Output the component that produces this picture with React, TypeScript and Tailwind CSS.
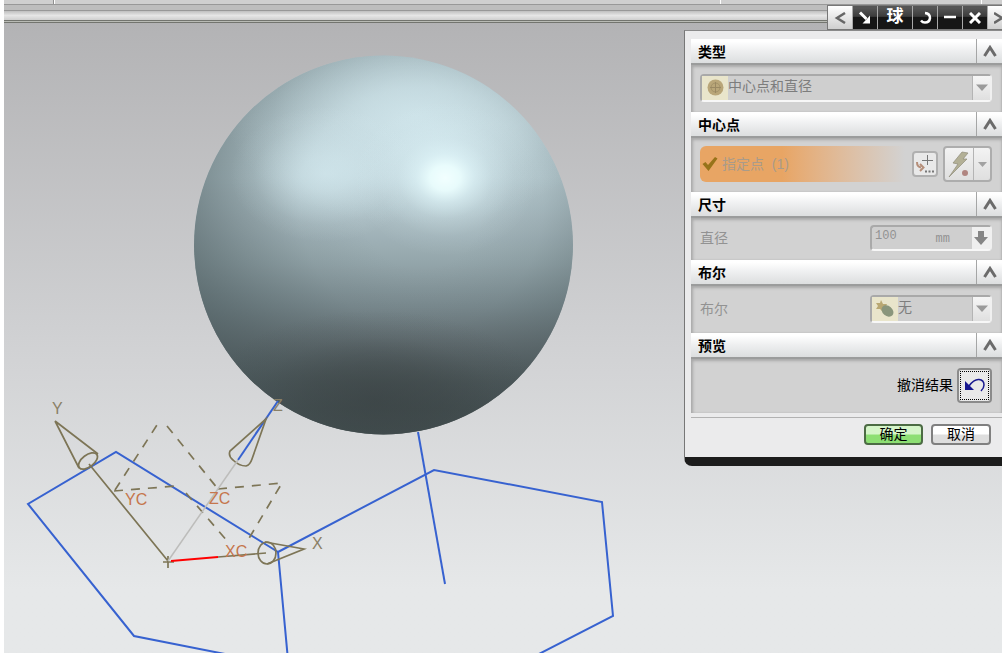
import React from "react";

interface SectionProps {
  title: string;
  bodyClass: string;
  children: React.ReactNode;
}

const Section: React.FC<SectionProps> = ({ title, bodyClass, children }) => {
  return (
    <section>
      <div className="flex h-[26px] items-stretch border-b-2 border-[#9b9c9c] bg-linear-to-b from-white from-10% via-[#eeeff0] via-50% to-[#dcdedf]">
        <h2 className="flex-1 pl-[7px] text-[14px] leading-[26px] font-bold text-black">
          {title}
        </h2>
        <button
          type="button"
          aria-label={`收起${title}`}
          className="flex w-[26px] items-center justify-center border-l border-[#a5a6a6]"
        >
          <svg width="14" height="12" viewBox="0 0 14 12">
            <path d="M1.5 11 L7 2.5 L12.5 11" fill="none" stroke="#6b6b6b" strokeWidth="3" />
          </svg>
        </button>
      </div>
      <div
        className={`flex items-center bg-[#d2d2d2] pr-[10px] pb-[2px] pl-[9px] text-[#929292] shadow-[inset_2px_2px_3px_#a9a9a9,inset_-1px_0_2px_#b5b5b5] ${bodyClass}`}
      >
        {children}
      </div>
    </section>
  );
};

const Triangle = () => (
  <svg width="12" height="7" viewBox="0 0 12 7">
    <path d="M0 0.5 H12 L6 7 Z" fill="#9a9a9a" />
  </svg>
);

interface PickerProps {
  id: string;
  label: string;
  value: string;
  icon: React.ReactNode;
  className: string;
}

const Picker: React.FC<PickerProps> = ({ id, label, value, icon, className }) => {
  return (
    <div
      className={`flex h-7 items-stretch rounded-[4px] border-2 border-t-[#a9a9a9] border-r-[#f0f0f0] border-b-[#f7f7f7] border-l-[#a9a9a9] bg-[#cfcfcf] ${className}`}
    >
      <span className="flex w-[26px] items-center justify-center bg-[#e9e5cb]">{icon}</span>
      <select
        id={id}
        aria-label={label}
        disabled
        className="min-w-0 flex-1 appearance-none bg-transparent pb-1 text-[14px] leading-5 text-[#7d7d7d] opacity-100"
      >
        <option>{value}</option>
      </select>
      <span className="flex w-[18px] items-center justify-center border-l border-[#b4b4b4] bg-linear-to-b from-[#f6f6f6] to-[#dfdfdf]">
        <Triangle />
      </span>
    </div>
  );
};

const Scene = () => {
  return (
    <svg className="absolute inset-0 h-full w-full" aria-label="模型视图">
      <defs>
        <linearGradient id="base" x1="0" y1="0" x2="0" y2="1">
          <stop offset="0" stopColor="#b2c7cd" />
          <stop offset="0.18" stopColor="#c0d4da" />
          <stop offset="0.32" stopColor="#b9cdd3" />
          <stop offset="0.44" stopColor="#a6b8be" />
          <stop offset="0.54" stopColor="#95a7ac" />
          <stop offset="0.66" stopColor="#7b8b90" />
          <stop offset="0.76" stopColor="#646f73" />
          <stop offset="0.86" stopColor="#4b5456" />
          <stop offset="0.93" stopColor="#3f4748" />
          <stop offset="1" stopColor="#3c4445" />
        </linearGradient>
        <radialGradient id="edge" cx="0.6" cy="0.4" r="0.64">
          <stop offset="0.25" stopColor="#4a595c" stopOpacity="0" />
          <stop offset="0.5" stopColor="#4a595c" stopOpacity="0.1" />
          <stop offset="0.75" stopColor="#4a595c" stopOpacity="0.35" />
          <stop offset="1" stopColor="#4a595c" stopOpacity="0.62" />
        </radialGradient>
        <radialGradient id="top">
          <stop offset="0" stopColor="#d6ecf2" stopOpacity="0.7" />
          <stop offset="0.25" stopColor="#d6ecf2" stopOpacity="0.56" />
          <stop offset="0.5" stopColor="#d6ecf2" stopOpacity="0.32" />
          <stop offset="0.75" stopColor="#d6ecf2" stopOpacity="0.1" />
          <stop offset="1" stopColor="#d6ecf2" stopOpacity="0" />
        </radialGradient>
        <radialGradient id="shine">
          <stop offset="0" stopColor="#f2ffff" />
          <stop offset="0.16" stopColor="#ecffff" stopOpacity="0.92" />
          <stop offset="0.32" stopColor="#e3f9fd" stopOpacity="0.6" />
          <stop offset="0.52" stopColor="#dff5fa" stopOpacity="0.28" />
          <stop offset="0.75" stopColor="#dff5fa" stopOpacity="0.08" />
          <stop offset="1" stopColor="#dff5fa" stopOpacity="0" />
        </radialGradient>
        <radialGradient id="dark">
          <stop offset="0" stopColor="#394142" stopOpacity="0.6" />
          <stop offset="0.4" stopColor="#394142" stopOpacity="0.38" />
          <stop offset="0.7" stopColor="#394142" stopOpacity="0.12" />
          <stop offset="1" stopColor="#394142" stopOpacity="0" />
        </radialGradient>
        <clipPath id="ball">
          <circle cx="383.5" cy="245" r="189.5" />
        </clipPath>
      </defs>

      <g clipPath="url(#ball)">
        <circle cx="383.5" cy="245" r="190" fill="url(#base)" />
        <circle cx="383.5" cy="245" r="190" fill="url(#edge)" />
        <ellipse cx="415" cy="115" rx="190" ry="110" fill="url(#top)" />
        <ellipse cx="325" cy="174" rx="95" ry="68" fill="url(#top)" />
        <ellipse cx="445" cy="178" rx="92" ry="78" fill="url(#shine)" />
        <ellipse cx="375" cy="400" rx="170" ry="90" fill="url(#dark)" />
      </g>

      {/* Sketch curves */}
      <g fill="none" stroke="#3762d0" strokeWidth="2">
        <path d="M288 660 L278 552 L116 452 L28 504 L134 636 L230 655" />
        <path d="M278 552 L434 470 L602 502 L613 616 L535 656" />
        <path d="M418 432 L445 584" />
        <path d="M278 401 L238 460" />
      </g>

      {/* Datum axes */}
      <g fill="none" stroke="#7d7556" strokeWidth="1.7">
        <path d="M168 561 L89 464 M163 562 H174 M168 556 V568" />
        <path d="M55 421 L98 454 M55 421 L79 468" />
        <ellipse cx="88" cy="461" rx="11" ry="6" transform="rotate(-37 88 461)" />
        <path d="M266 419 L230 451 Q228 456 233 460 Q239 466 246 466 Q250 465 252 459 Z" />
        <path d="M218 557 L266 553" />
        <path d="M265 542 L304 549 L267 564" />
        <ellipse cx="267" cy="553" rx="9" ry="11" />
        <path strokeDasharray="9 8" d="M115 490 L157 425 M167 426 L218 489 M114 491 L176 486 M218 489 L282 483 L248 540 M186 493 L228 542" />
      </g>
      <path d="M168 561 L238 460" stroke="#bdbdbb" strokeWidth="1.5" />
      <path d="M171 561 L218 557" stroke="#ff0000" strokeWidth="2" />
      <g className="font-['Liberation_Sans',sans-serif] text-[16px]" fill="#8a8067">
        <text x="52" y="414">Y</text>
        <text x="312" y="549">X</text>
        <text x="273" y="411">Z</text>
      </g>
      <g className="font-['Liberation_Sans',sans-serif] text-[16px]" fill="#c5764d">
        <text x="125" y="505">YC</text>
        <text x="209" y="504">ZC</text>
        <text x="225" y="557">XC</text>
      </g>
    </svg>
  );
};

const TitleBar = () => {
  const light = "flex w-6 items-center justify-center bg-linear-to-b from-white to-[#cfcfcf]";
  const dark =
    "flex w-6 items-center justify-center bg-linear-to-b from-[#555555] from-10% via-[#3c3c3c] via-45% to-[#161616] to-50%";
  return (
    <header className="flex h-[25px] w-[175px] gap-px self-end overflow-hidden border border-r-0 border-[#777777] bg-[#a9a9a9] *:shrink-0">
      <button type="button" aria-label="上一个" className={light}>
        <svg width="12" height="12" viewBox="0 0 12 12">
          <path d="M11 1 L3 6 L11 11" fill="none" stroke="#666666" strokeWidth="2.5" />
        </svg>
      </button>
      <button type="button" aria-label="固定" className={dark}>
        <svg width="14" height="14" viewBox="0 0 14 14">
          <path d="M2 1.5 L8.5 8" stroke="#ffffff" strokeWidth="3" />
          <path d="M12 4.5 V12.5 H4.5 Z" fill="#ffffff" />
        </svg>
      </button>
      <h1 className="w-[34px] bg-linear-to-b from-[#555555] from-10% via-[#3c3c3c] via-45% to-[#161616] to-50% text-center text-[17px] leading-[22px] font-bold text-white">
        球
      </h1>
      <button type="button" aria-label="重置" className={dark}>
        <svg width="14" height="14" viewBox="0 0 14 14">
          <path d="M7 2 Q12 2.5 12 7 Q11.5 11.5 7 11.5 Q4.5 11.5 3 9.5" fill="none" stroke="#ffffff" strokeWidth="2.5" />
        </svg>
      </button>
      <button type="button" aria-label="最小化" className={dark}>
        <svg width="12" height="12" viewBox="0 0 12 12">
          <path d="M0 5 H12" stroke="#ffffff" strokeWidth="2.5" />
        </svg>
      </button>
      <button type="button" aria-label="关闭" className={dark}>
        <svg width="12" height="12" viewBox="0 0 12 12">
          <path d="M1 1 L11 11 M11 1 L1 11" stroke="#ffffff" strokeWidth="3" />
        </svg>
      </button>
      <button type="button" aria-label="下一个" className={light}>
        <svg width="12" height="12" viewBox="0 0 12 12">
          <path d="M0 1 L8 6 L0 11" fill="none" stroke="#666666" strokeWidth="2.5" />
        </svg>
      </button>
    </header>
  );
};

const SphereDialog = () => {
  return (
    <div className="absolute top-[5px] right-0 flex w-[318px] flex-col">
      <TitleBar />
      <form className="rounded-bl-lg border-t border-b-[9px] border-l border-t-[#8a8a8a] border-b-[#1c1c1c] border-l-[#777777] bg-[#ebebec] pt-2 pl-[6px]">
        <Section title="类型" bodyClass="h-[47px]">
          <Picker
            id="type"
            label="类型"
            value="中心点和直径"
            className="flex-1"
            icon={
              <svg width="17" height="17" viewBox="0 0 17 17">
                <circle cx="8.5" cy="8.5" r="8" fill="#b9a679" />
                <circle cx="8.5" cy="8.5" r="4.5" fill="none" stroke="#a39268" />
                <path d="M8.5 3 V14 M3 8.5 H14" stroke="#9a8963" strokeWidth="1" />
              </svg>
            }
          />
        </Section>

        <Section title="中心点" bodyClass="h-[54px]">
          <div className="flex h-9 flex-1 items-center rounded-l-md bg-linear-to-r from-[#e8a564] from-40% to-[#d2d2d2]">
            <svg width="16" height="16" viewBox="0 0 16 16" className="mr-1 ml-[2px]">
              <path d="M0.5 8 L3.5 6 L6 9 L13 1 L15.5 2.5 L6.5 15 Z" fill="#977319" />
            </svg>
            <span className="text-[14px] leading-5 text-[#a99b8a]">指定点&nbsp; (1)</span>
          </div>
          <button
            type="button"
            aria-label="点构造器"
            className="ml-[7px] flex size-[26px] items-center justify-center rounded-[4px] border-2 border-[#b0b0b0] bg-[#e9e9e9]"
          >
            <svg width="20" height="20" viewBox="0 0 20 20">
              <path d="M12.5 1 V11 M7 6.5 H18" stroke="#777777" strokeWidth="1" />
              <path d="M2 8 Q2 13 6 13.5 M5 10 L8.5 13.5 L5 17" fill="none" stroke="#b58e79" strokeWidth="2" />
              <path d="M10 17.5 H19" stroke="#777777" strokeWidth="2" strokeDasharray="2 1.5" />
            </svg>
          </button>
          <div className="ml-[5px] flex h-9 w-[49px] items-stretch overflow-hidden rounded-[4px] border-2 border-[#adadad] bg-linear-to-b from-[#f3f3f3] to-[#dfdfdf]">
            <button type="button" aria-label="推断的点" className="flex w-7 items-center justify-center">
              <svg width="24" height="28" viewBox="0 0 24 28">
                <path d="M15 2 L21 3 L16 9 H20 L2 27 L11 14 L6 13 Z" fill="#b3b096" stroke="#8f8d7a" strokeWidth="0.7" />
                <circle cx="18" cy="23" r="3" fill="#b08580" />
              </svg>
            </button>
            <button
              type="button"
              aria-label="更多点类型"
              className="flex flex-1 items-center justify-center border-l border-[#b4b4b4]"
            >
              <svg width="9" height="5" viewBox="0 0 9 5">
                <path d="M0 0 H9 L4.5 5 Z" fill="#a2a2a2" />
              </svg>
            </button>
          </div>
        </Section>

        <Section title="尺寸" bodyClass="h-[42px]">
          <label htmlFor="diameter" className="flex-1 text-[14px] leading-5">直径</label>
          <div className="flex h-[26px] w-[122px] items-stretch rounded-[4px] border-2 border-t-[#a9a9a9] border-r-[#f0f0f0] border-b-[#f7f7f7] border-l-[#a9a9a9] bg-[#cfcfcf]">
            <input
              id="diameter"
              disabled
              defaultValue="100"
              className="min-w-0 flex-1 bg-transparent pb-1 pl-[3px] font-['Liberation_Mono',monospace] text-[12px] text-[#929292]"
            />
            <span className="pt-1 pr-[22px] font-['Liberation_Mono',monospace] text-[12px] leading-4">mm</span>
            <button
              type="button"
              aria-label="公式选项"
              className="flex w-[18px] items-center justify-center bg-[#efefef]"
            >
              <svg width="14" height="14" viewBox="0 0 14 14">
                <path d="M4 0 H10 V6 H14 L7 14 L0 6 H4 Z" fill="#858585" />
              </svg>
            </button>
          </div>
        </Section>

        <Section title="布尔" bodyClass="h-[47px]">
          <label htmlFor="boolean" className="flex-1 text-[14px] leading-5">布尔</label>
          <Picker
            id="boolean"
            label="布尔"
            value="无"
            className="w-[122px]"
            icon={
              <svg width="18" height="18" viewBox="0 0 18 18">
                <path d="M5 0 L7 4 L11 4 L9 8 L6 11 L4 9 L0 9 L2 6 L0 3 L4 3 Z" fill="#b9a873" />
                <ellipse cx="11.5" cy="11" rx="6.5" ry="5" transform="rotate(40 11.5 11)" fill="#8a967c" />
              </svg>
            }
          />
        </Section>

        <Section title="预览" bodyClass="h-[54px] justify-end">
          <span id="undo-label" className="mr-1 text-[14px] leading-5 text-black">撤消结果</span>
          <button
            type="button"
            aria-labelledby="undo-label"
            className="flex size-[35px] rounded-[4px] border-2 border-[#8b8b8b] bg-[#e9e9e9] p-px"
          >
            <span className="flex flex-1 items-center justify-center self-stretch border border-dotted border-black">
              <svg width="22" height="16" viewBox="0 0 22 16">
                <path d="M1 4 V13 H10 Z" fill="#17178f" />
                <path d="M5 9 Q10 2 15 2.5 Q20 3 20 8 Q20 11 17 14" fill="none" stroke="#17178f" strokeWidth="1.5" />
              </svg>
            </span>
          </button>
        </Section>

        <div className="mt-1 flex h-10 gap-2 border-t border-[#b2b2b2] pt-[6px] pr-[11px]">
          <button
            type="submit"
            className="ml-auto h-[21px] w-[59px] rounded-[4px] border-2 border-[#4c6b44] bg-linear-to-b from-[#d5f5c9] from-45% to-[#8ddf73] to-55% text-[14px] leading-[17px] text-black"
          >
            确定
          </button>
          <button
            type="button"
            className="h-[21px] w-[60px] rounded-[4px] border-2 border-[#808080] bg-linear-to-b from-white from-45% to-[#dedede] to-55% text-[14px] leading-[17px] text-black"
          >
            取消
          </button>
        </div>
      </form>
    </div>
  );
};

export default function App() {
  return (
    <main className="relative flex min-h-screen flex-col overflow-hidden border-l-4 border-white bg-[#b4b4b6] font-['Liberation_Sans','Noto_Sans_CJK_SC',sans-serif]">
      {/* Toolbar remnants above the viewport */}
      <div className="flex h-1 bg-[#cfcfcf] pl-[49px]">
        <span className="w-px bg-[#8f8f8f]" />
        <span className="w-px bg-white" />
        <span className="mr-[260px] ml-auto w-px bg-white" />
        <span className="mr-5 w-px bg-white" />
      </div>
      <div className="h-[7px] border-y border-[#989898] bg-[#bdbdbd]" />
      <div className="h-[9px] bg-linear-to-b from-[#c0c0c0] via-[#e6e6e6] to-[#cfcfcf]" />
      <div className="h-[3px] border-y border-[#73756f] bg-[#b9bbb5]" />
      <div className="flex-1 bg-linear-to-b from-[#b3b3b5] via-[#d0d1d3] via-50% to-[#e6e8e9] to-90%" />
      <div className="absolute inset-y-0 right-0 -left-1">
        <Scene />
      </div>
      <SphereDialog />
    </main>
  );
}
